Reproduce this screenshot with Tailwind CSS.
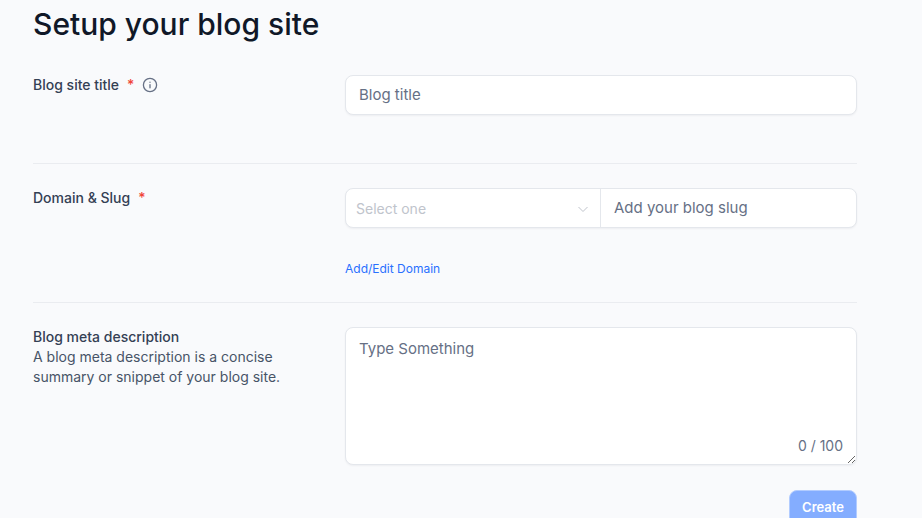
<!DOCTYPE html>
<html lang="en">
<head>
<meta charset="utf-8">
<title>Setup your blog site</title>
<script src="https://cdn.jsdelivr.net/npm/@tailwindcss/browser@4"></script>
</head>
<body class="bg-[#f9fafc] font-['Inter',sans-serif] h-[518px] overflow-hidden">
<main class="w-[824px] ml-[33px] pt-[6px]">
  <h1 class="text-[30px] leading-9 font-medium text-[#101828]">Setup your blog site</h1>

  <section class="flex mt-[33px] pb-[48px] border-b border-[#eaecf0]">
    <div class="w-[312px] flex items-center self-start h-5 text-sm font-medium text-[#344054]">
      <span>Blog site title</span>
      <span class="ml-2 text-[#f04438]">*</span>
      <svg class="ml-2 w-4 h-4" viewBox="0 0 16 16" fill="none" stroke="#667085" stroke-width="1.3" stroke-linecap="round"><circle cx="8" cy="8" r="6.6"/><path d="M8 7.6v3.2M8 5.2v.1"/></svg>
    </div>
    <input class="w-[512px] h-10 px-[13px] pb-[2px] bg-white border border-[#e4e7ec] rounded-lg shadow-[0_1px_2px_rgba(16,24,40,0.05)] text-[15px] placeholder:text-[#667085]" placeholder="Blog title">
  </section>

  <section class="flex pt-6 pb-[25px] border-b border-[#eaecf0]">
    <div class="w-[312px] h-5 text-sm font-medium text-[#344054] flex items-center self-start">
      <span>Domain &amp; Slug</span>
      <span class="ml-2 text-[#f04438]">*</span>
    </div>
    <div class="w-[512px]">
      <div class="flex h-10 bg-white border border-[#e4e7ec] rounded-lg shadow-[0_1px_2px_rgba(16,24,40,0.05)]">
        <div class="w-[255px] flex items-center justify-between pl-[10px] pr-[11px] pt-[1px] border-r border-[#e4e7ec] text-sm text-[#c0c4cc]">
          <span>Select one</span>
          <svg class="w-3 h-3" viewBox="0 0 12 12" fill="none" stroke="#c0c4cc" stroke-width="1"><path d="M1.5 4l4.5 4.5L10.5 4"/></svg>
        </div>
        <input class="flex-1 min-w-0 px-[13px] bg-transparent text-[15px] placeholder:text-[#667085]" placeholder="Add your blog slug">
      </div>
      <a href="#" class="block mt-[33px] text-xs leading-4 text-[#2970ff]">Add/Edit Domain</a>
    </div>
  </section>

  <section class="flex pt-6">
    <div class="w-[312px] text-sm leading-5 text-[#475467]">
      <p class="font-medium text-[#344054]">Blog meta description</p>
      <p class="w-[260px]">A blog meta description is a concise summary or snippet of your blog site.</p>
    </div>
    <div class="relative w-[512px]">
      <textarea class="block w-full h-[138px] px-[13px] py-[10px] bg-white border border-[#e4e7ec] rounded-lg shadow-[0_1px_2px_rgba(16,24,40,0.05)] text-[15px] leading-[22px] placeholder:text-[#667085]" placeholder="Type Something"></textarea>
      <span class="absolute right-[14px] bottom-[11px] text-sm leading-4 text-[#667085]">0 / 100</span>
    </div>
  </section>

  <div class="flex justify-end mt-[25px]">
    <button class="w-[68px] h-9 bg-[#84adff] border border-[#b2ccff] rounded-lg text-[13px] font-semibold text-white">Create</button>
  </div>
</main>
</body>
</html>
